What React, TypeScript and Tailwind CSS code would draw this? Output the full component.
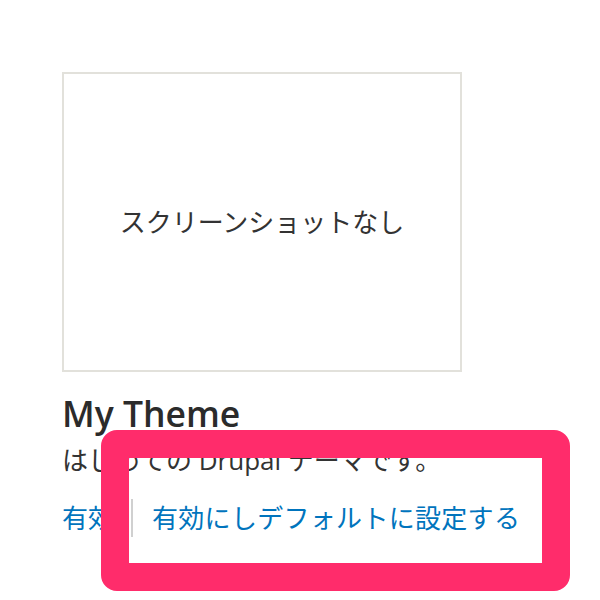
export default function App() {
    return (
        <div className="relative h-[600px] w-[600px] overflow-hidden bg-white text-[#333] [font-family:'Open_Sans','Noto_Sans_CJK_JP',sans-serif]">
            <div className="pl-[62px] pt-[72px]">
                <div className="flex h-[300px] w-[400px] items-center justify-center border-2 border-[#e2e1db] text-[26px] leading-none">
                    スクリーンショットなし
                </div>

                <h3 className="mt-[21px] text-[35.5px] font-semibold leading-[40px] text-[#2b2b2b]">My Theme</h3>
                <p className="mt-[12px] text-[26px] leading-[30px]">はじめての Drupal テーマです。</p>

                <ul className="mt-[24px] flex items-center text-[26px] leading-[38px] text-[#0074bd]">
                    <li className="pr-[17px]">有効</li>
                    <li className="border-l-2 border-[#d0d0d0] pl-[19px] tracking-[0.3px]">有効にしデフォルトに設定する</li>
                </ul>
            </div>

            <div className="absolute left-[101px] top-[430px] h-[161px] w-[469px] rounded-[16px] border-[28px] border-[#ff2c6b]" />
        </div>
    );
}
